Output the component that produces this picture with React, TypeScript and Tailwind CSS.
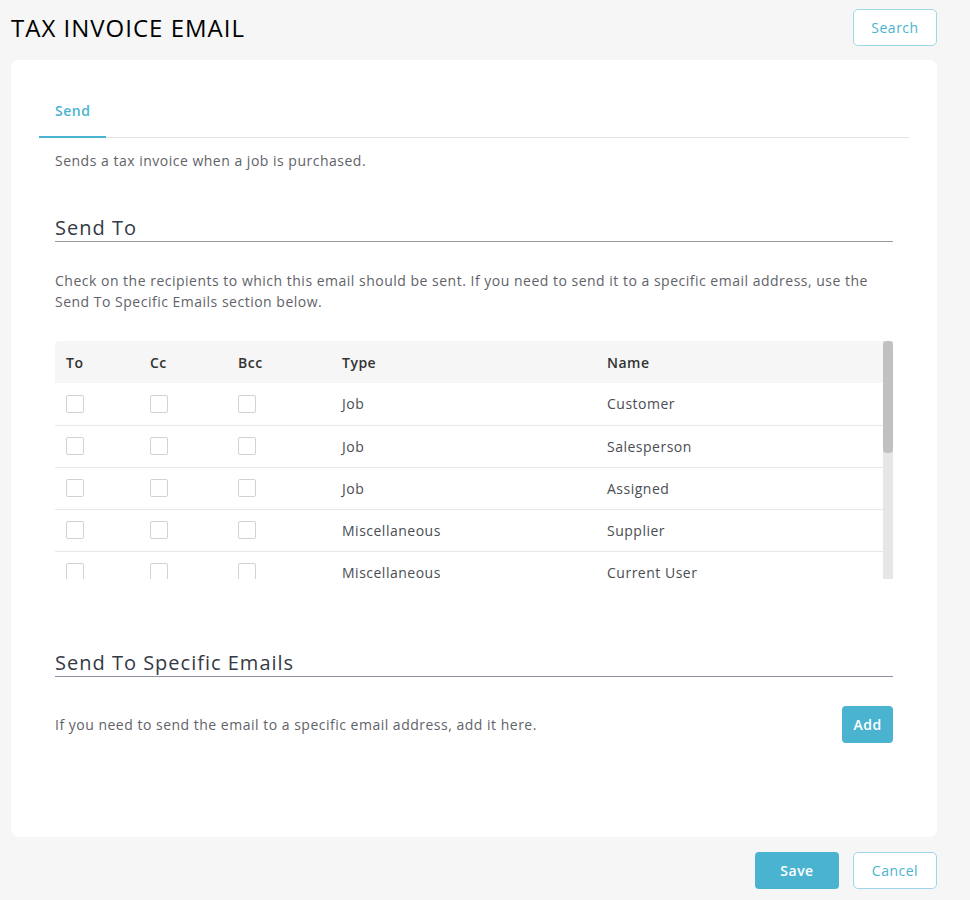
import React, { useState } from 'react';

// Tax invoice email settings page: recipients table + specific emails section.

const ROWS: { type: string; name: string }[] = [
  { type: 'Job', name: 'Customer' },
  { type: 'Job', name: 'Salesperson' },
  { type: 'Job', name: 'Assigned' },
  { type: 'Miscellaneous', name: 'Supplier' },
  { type: 'Miscellaneous', name: 'Current User' },
  { type: 'Miscellaneous', name: 'Accounts' },
  { type: 'Miscellaneous', name: 'Manager' },
  { type: 'Job', name: 'Site Contact' },
  { type: 'Job', name: 'Billing Contact' },
  { type: 'Miscellaneous', name: 'Administrator' },
  { type: 'Miscellaneous', name: 'Branch' },
];

const FONT = { fontFamily: "'Open Sans', 'Liberation Sans', sans-serif" };

const Check: React.FC<{ checked: boolean; onChange: () => void }> = ({ checked, onChange }) => (
  <button
    onClick={onChange}
    className={`w-[18px] h-[18px] rounded-[2px] border flex items-center justify-center ${
      checked ? 'bg-[#4ab3d0] border-[#4ab3d0]' : 'bg-white border-[#d2d2d2]'
    }`}
  >
    {checked && (
      <svg width="11" height="11" viewBox="0 0 12 12" fill="none">
        <path d="M2 6.5l2.5 2.5L10 3.5" stroke="white" strokeWidth="2" strokeLinecap="round" strokeLinejoin="round" />
      </svg>
    )}
  </button>
);

export default function App() {
  const [checks, setChecks] = useState<Record<string, boolean>>({});
  const toggle = (k: string) => setChecks(c => ({ ...c, [k]: !c[k] }));

  return (
    <div style={FONT} className="min-h-[900px] bg-[#f6f6f6] px-[11px] pt-[9px] pb-[12px] text-[14px] tracking-[0.5px] text-[#5f6369]">
      {/* Header */}
      <div className="flex items-center justify-between pr-[22px]">
        <h1 className="text-[24px] leading-[37px] font-normal text-black tracking-[1px]">TAX INVOICE EMAIL</h1>
        <button className="w-[84px] h-[37px] rounded-[5px] border border-[#9dd7e7] bg-white text-[#4ab3d0] text-[14px]">
          Search
        </button>
      </div>

      {/* Card */}
      <div className="mt-[14px] mr-[22px] bg-white rounded-[8px] px-[28px] pt-[26px] pb-[94px]">
        <div className="flex border-b border-[#e3e3e3]">
          <div className="w-[67px] pl-[16px] pt-[15px] pb-[15px] border-b-2 border-[#4ab3d0] -mb-px text-[#4ab3d0] font-semibold leading-[20px]">
            Send
          </div>
        </div>

        <div className="px-[16px]">
          <p className="mt-[12px] leading-[21px]">Sends a tax invoice when a job is purchased.</p>

          <h2 className="mt-[44px] text-[20px] leading-[26px] text-[#343a45] border-b border-[#9a9a9a] tracking-[1px]">
            Send To
          </h2>
          <p className="mt-[28px] leading-[21px]">
            Check on the recipients to which this email should be sent. If you need to send it to a specific email address, use the
            Send To Specific Emails section below.
          </p>

          {/* Recipients table with its scrollbar */}
          <div className="mt-[29px] h-[238px] flex">
            <div className="flex-1 overflow-hidden">
              <table className="w-full border-collapse text-left">
                <thead>
                  <tr className="bg-[#f6f6f6] h-[42px] text-[#333]">
                    <th className="pl-[11px] w-[95px] font-semibold rounded-tl-[4px]">To</th>
                    <th className="w-[88px] font-semibold">Cc</th>
                    <th className="w-[104px] font-semibold">Bcc</th>
                    <th className="w-[265px] font-semibold">Type</th>
                    <th className="font-semibold">Name</th>
                  </tr>
                </thead>
                <tbody>
                  {ROWS.map((r, i) => (
                    <tr key={i} className="h-[42px] border-b border-[#e8e8e8] text-[#4a4d52]">
                      <td className="pl-[11px]">
                        <Check checked={!!checks[`to${i}`]} onChange={() => toggle(`to${i}`)} />
                      </td>
                      <td>
                        <Check checked={!!checks[`cc${i}`]} onChange={() => toggle(`cc${i}`)} />
                      </td>
                      <td>
                        <Check checked={!!checks[`bcc${i}`]} onChange={() => toggle(`bcc${i}`)} />
                      </td>
                      <td>{r.type}</td>
                      <td>{r.name}</td>
                    </tr>
                  ))}
                </tbody>
              </table>
            </div>
            <div className="w-[10px] bg-[#e6e6e6] flex flex-col">
              <div className="h-[112px] bg-[#c1c1c1] rounded-[4px]" />
            </div>
          </div>

          <h2 className="mt-[71px] text-[20px] leading-[26px] text-[#343a45] border-b border-[#8e93a3] tracking-[1px]">
            Send To Specific Emails
          </h2>
          <div className="mt-[29px] flex items-center justify-between">
            <p className="leading-[21px]">If you need to send the email to a specific email address, add it here.</p>
            <button className="w-[51px] h-[37px] rounded-[4px] bg-[#4ab3d0] text-white font-semibold">Add</button>
          </div>
        </div>
      </div>

      {/* Footer */}
      <div className="mt-[15px] mr-[22px] flex justify-end gap-[14px]">
        <button className="w-[84px] h-[37px] rounded-[4px] bg-[#4ab3d0] text-white font-semibold">Save</button>
        <button className="w-[84px] h-[37px] rounded-[5px] border border-[#9dd7e7] bg-white text-[#4ab3d0]">Cancel</button>
      </div>
    </div>
  );
}
